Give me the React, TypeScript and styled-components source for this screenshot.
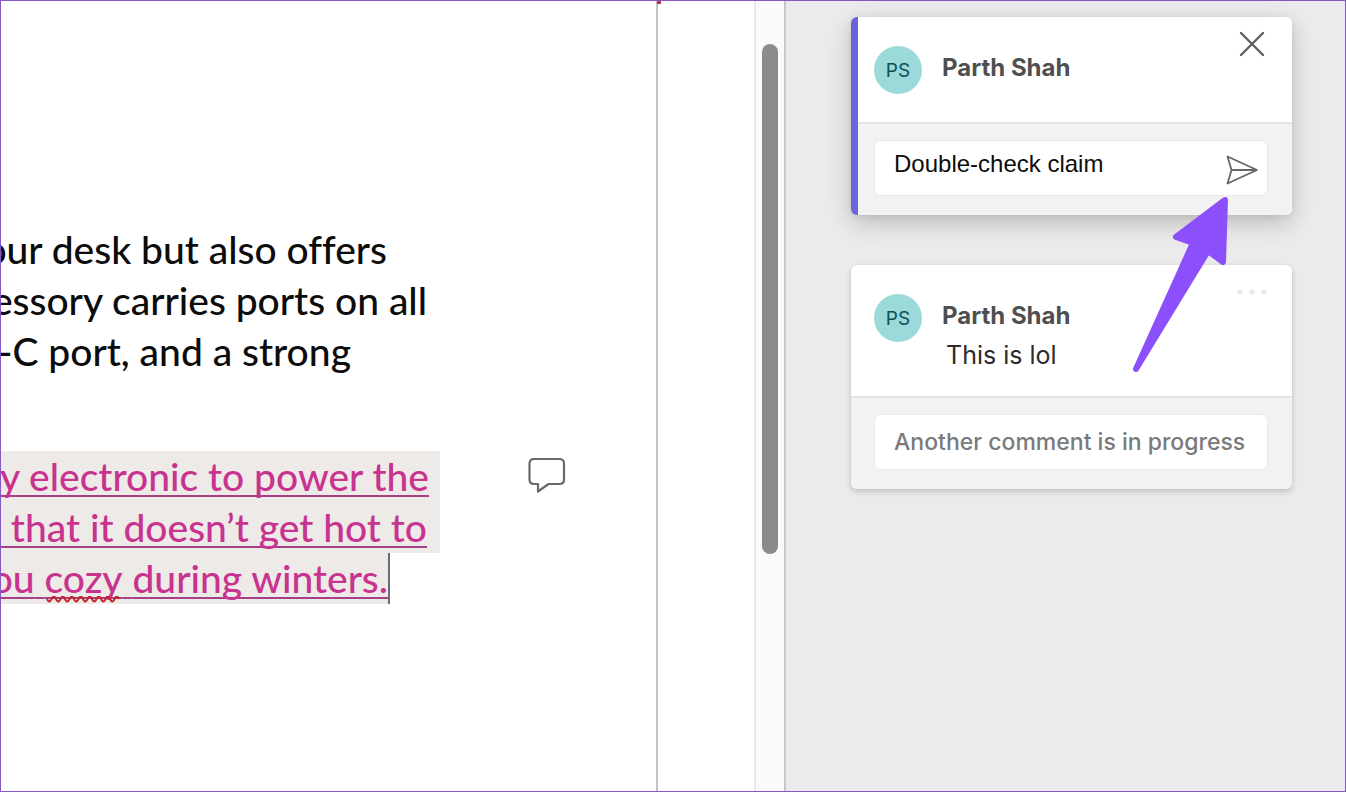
import React from "react";
import styled, { createGlobalStyle } from "styled-components";

const GlobalStyle = createGlobalStyle`
  *, *::before, *::after { box-sizing: border-box; }
  body { margin: 0; background: #fff; }
  button, input { font: inherit; margin: 0; }
`;

const Shell = styled.div`
  display: flex;
  min-height: 100vh;
  overflow: hidden;
  border: 1px solid #8457c6;
  font-family: Inter, "Open Sans", sans-serif;
`;

const DocumentPage = styled.main`
  flex: 1;
  min-width: 0;
  overflow: hidden;
  padding-top: 223px;
  border-right: 2px solid #c3c3c3;
  background: #fff;
  color: #0c0c0c;
  font-family: Lato, "Liberation Sans", sans-serif;
  font-size: 39px;
  font-weight: 500;
  font-variant-ligatures: none;
  line-height: 51px;
`;

const Paragraph = styled.p`
  margin: 0 0 74px;
`;

const Line = styled.span<{ $end: number }>`
  display: flex;
  justify-content: flex-end;
  width: ${(p) => p.$end}px;
  white-space: pre;
`;

const CommentedRow = styled.div`
  display: flex;
  align-items: flex-start;
  gap: 88px;
`;

const Insertion = styled.ins`
  display: block;
  width: 439px;
  color: #c8338f;
  text-decoration: none;
`;

const InsertedLine = styled(Line)<{ $pad?: number }>`
  padding-right: ${(p) => p.$pad ?? 0}px;
  background: #edeae8;
`;

const Underlined = styled.span`
  text-decoration: underline 2px #a53f86;
  text-underline-offset: 4px;
  text-decoration-skip-ink: none;
`;

const Misspelled = styled.span`
  position: relative;
`;

const Squiggle = styled.svg`
  position: absolute;
  left: 0;
  bottom: -3px;
  width: 100%;
  height: 8px;
`;

const Caret = styled.span`
  flex: 0 0 2px;
  height: 51px;
  margin-right: -2px;
  background: #6c6c6c;
`;

const IconButton = styled.button`
  display: flex;
  padding: 0;
  border: 0;
  background: none;
  cursor: pointer;
`;

const MarkerButton = styled(IconButton)`
  margin-top: 6px;
`;

const RevisionMark = styled.i`
  width: 4px;
  height: 3px;
  margin: 0 -3px 0 -1px;
  background: #b8325c;
  z-index: 1;
`;

const Gutter = styled.div`
  flex: 0 0 96px;
  background: #fff;
`;

const ScrollTrack = styled.div`
  flex: 0 0 32px;
  padding: 43px 6px 0;
  border-left: 2px solid #e8e8e8;
  border-right: 2px solid #c8c8c8;
  background: #fafafa;
`;

const ScrollThumb = styled.div`
  width: 16px;
  height: 510px;
  border-radius: 8px;
  background: #8b8b8b;
`;

const CommentsPane = styled.aside`
  position: relative;
  display: flex;
  flex: 0 0 559px;
  flex-direction: column;
  gap: 50px;
  min-width: 0;
  padding: 16px 53px 16px 65px;
  background: #ebebeb;
`;

const Card = styled.article<{ $active?: boolean }>`
  overflow: hidden;
  border-radius: 6px;
  background: ${(p) =>
    p.$active ? "linear-gradient(90deg, #6c63d6 7px, #fff 7px)" : "#fff"};
  padding-left: ${(p) => (p.$active ? 7 : 0)}px;
  box-shadow: ${(p) =>
    p.$active
      ? "0 8px 24px rgba(0, 0, 0, 0.2), 0 1px 6px rgba(0, 0, 0, 0.08)"
      : "0 3px 6px rgba(0, 0, 0, 0.17), 0 0 2px rgba(0, 0, 0, 0.1)"};
`;

const CardHeader = styled.header<{ $active?: boolean }>`
  display: flex;
  gap: 20px;
  min-height: ${(p) => (p.$active ? 105 : 131)}px;
  padding: 29px 27px 0 ${(p) => (p.$active ? 16 : 23)}px;
`;

const Avatar = styled.span`
  display: flex;
  flex: 0 0 48px;
  align-items: center;
  justify-content: center;
  height: 48px;
  border-radius: 50%;
  background: #9bdad9;
  color: #0b5154;
  font-size: 19px;
`;

const Author = styled.div`
  flex: 1;
`;

const Name = styled.h2`
  margin: 6px 0 0;
  color: #4f4f4f;
  font-size: 24px;
  font-weight: 700;
  line-height: 32px;
`;

const Message = styled.p`
  margin: 7px 0 0 4px;
  color: #2c2c2c;
  font-size: 25px;
  line-height: 32px;
`;

const HeaderAction = styled(IconButton)`
  align-self: flex-start;
  margin-top: -15px;
`;

const MoreAction = styled(HeaderAction)`
  margin: -5px -3px 0 0;
`;

const CardFooter = styled.form<{ $active?: boolean }>`
  padding: 16px 24px 19px ${(p) => (p.$active ? 16 : 23)}px;
  border-top: 2px solid #e4e4e4;
  background: #f2f2f2;
`;

const Field = styled.div`
  display: flex;
  align-items: center;
  height: 56px;
  padding: 0 8px 0 19px;
  border: 1px solid #e9e9e9;
  border-radius: 7px;
  background: #fff;
`;

const DraftField = styled(Field)`
  padding-top: 4px;
`;

const DraftInput = styled.input`
  flex: 1;
  min-width: 0;
  height: 100%;
  padding: 0 0 12px;
  border: 0;
  outline: 0;
  background: none;
  color: #0c0c0c;
  font-family: "Liberation Sans", Arial, sans-serif;
  font-size: 24px;
`;

const ReplyInput = styled(DraftInput)`
  padding: 0;
  font-family: inherit;
  font-size: 23px;
  font-weight: 500;

  &::placeholder {
    color: #7a7a7a;
    opacity: 1;
  }
`;

const Pointer = styled.svg`
  position: absolute;
  top: 193px;
  right: 113px;
  pointer-events: none;
`;

function CommentIcon() {
  return (
    <svg width="38" height="36" viewBox="0 0 38 36" fill="none" stroke="#696969" strokeWidth="2.2" strokeLinejoin="round">
      <path d="M6 2H31.500Q36 2 36 6.500V22.500Q36 27 31.500 27H20.500L10 34.500V27H6Q1.500 27 1.500 22.500V6.500Q1.500 2 6 2Z" />
    </svg>
  );
}

function CloseIcon() {
  return (
    <svg width="26" height="26" viewBox="0 0 26 26" stroke="#5f5f5f" strokeWidth="2.4" strokeLinecap="round">
      <path d="M2 2L24 24M24 2L2 24" />
    </svg>
  );
}

function MoreIcon() {
  return (
    <svg width="32" height="6" viewBox="0 0 32 6" fill="#e9e9e9">
      <circle cx="4" cy="3" r="2.8" />
      <circle cx="16" cy="3" r="2.8" />
      <circle cx="28" cy="3" r="2.8" />
    </svg>
  );
}

function SendIcon() {
  return (
    <svg width="34" height="30" viewBox="0 0 34 30" fill="none" stroke="#666" strokeWidth="1.8" strokeLinejoin="round">
      <path d="M2.500 1.500L32 15L2.500 28.500L6.500 15ZM6.500 15H31" />
    </svg>
  );
}

export default function App() {
  const waves = "M0 3" + Array.from({ length: 8 }, () => " q2.25 5 4.5 0 t4.5 0").join("");
  return (
    <>
      <GlobalStyle />
      <Shell>
        <DocumentPage>
          <Paragraph>
            <Line $end={386}>our desk but also offers</Line>
            <Line $end={426}>essory carries ports on all</Line>
            <Line $end={350}>-C port, and a strong</Line>
          </Paragraph>
          <CommentedRow>
            <Insertion>
              <InsertedLine $end={439} $pad={11}>
                <Underlined>y electronic to power the</Underlined>
              </InsertedLine>
              <InsertedLine $end={439} $pad={13}>
                <Underlined>  that it doesn’t get hot to</Underlined>
              </InsertedLine>
              <InsertedLine $end={387}>
                <Underlined>
                  ou{" "}
                  <Misspelled>
                    cozy
                    <Squiggle viewBox="0 0 74 8" fill="none" stroke="#c4262e" strokeWidth="2">
                      <path d={waves} />
                    </Squiggle>
                  </Misspelled>{" "}
                  during winters.
                </Underlined>
                <Caret />
              </InsertedLine>
            </Insertion>
            <MarkerButton type="button" aria-label="Show comment">
              <CommentIcon />
            </MarkerButton>
          </CommentedRow>
        </DocumentPage>
        <RevisionMark />
        <Gutter />
        <ScrollTrack>
          <ScrollThumb />
        </ScrollTrack>
        <CommentsPane>
          <Card $active>
            <CardHeader $active>
              <Avatar>PS</Avatar>
              <Author>
                <Name>Parth Shah</Name>
              </Author>
              <HeaderAction type="button" aria-label="Close">
                <CloseIcon />
              </HeaderAction>
            </CardHeader>
            <CardFooter $active onSubmit={(e) => e.preventDefault()}>
              <DraftField>
                <DraftInput aria-label="Comment" defaultValue="Double-check claim" />
                <IconButton type="submit" aria-label="Send">
                  <SendIcon />
                </IconButton>
              </DraftField>
            </CardFooter>
          </Card>
          <Card>
            <CardHeader>
              <Avatar>PS</Avatar>
              <Author>
                <Name>Parth Shah</Name>
                <Message>This is lol</Message>
              </Author>
              <MoreAction type="button" aria-label="More actions">
                <MoreIcon />
              </MoreAction>
            </CardHeader>
            <CardFooter onSubmit={(e) => e.preventDefault()}>
              <Field>
                <ReplyInput aria-label="Reply" placeholder="Another comment is in progress" readOnly />
              </Field>
            </CardFooter>
          </Card>
          <Pointer width="100" height="182" viewBox="0 0 100 182" fill="#8b50fb" stroke="#8b50fb" strokeWidth="6" strokeLinejoin="round" aria-hidden="true">
            <path d="M93 6L44 43L61 49L4 175L76 57L91 68Z" />
          </Pointer>
        </CommentsPane>
      </Shell>
    </>
  );
}
